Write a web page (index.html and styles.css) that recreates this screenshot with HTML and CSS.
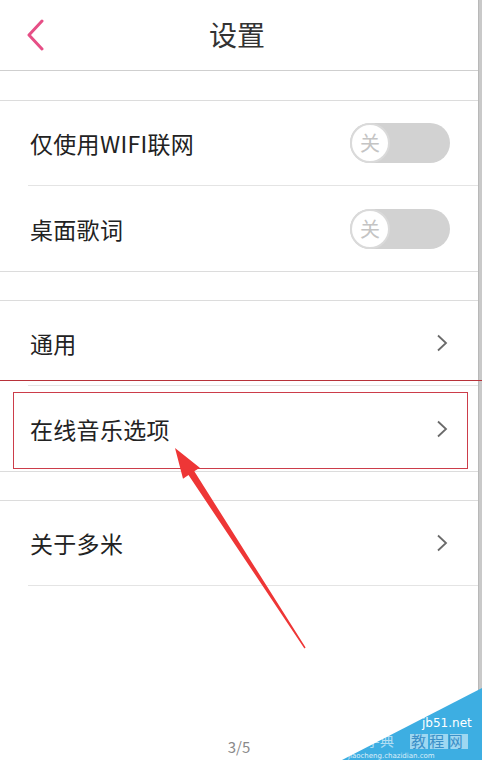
FILE: index.html
```html
<!DOCTYPE html>
<html lang="zh">
<head>
<meta charset="utf-8">
<title>设置</title>
<link rel="stylesheet" href="styles.css">
</head>
<body>
<div class="frame">
  <div class="screen">
    <header class="topbar">
      <svg class="back" width="20" height="32" viewBox="0 0 20 32"><polyline points="16,2 3,16 16,30" fill="none" stroke="#e64f86" stroke-width="3" stroke-linecap="round" stroke-linejoin="round"/></svg>
      <h1 class="title">设置</h1>
    </header>

    <section class="group">
      <div class="row"><div class="row-inner"><span class="label">仅使用WIFI联网</span><span class="toggle"><span class="knob">关</span></span></div></div>
      <div class="row"><div class="row-inner"><span class="label">桌面歌词</span><span class="toggle"><span class="knob">关</span></span></div></div>
    </section>

    <section class="group">
      <div class="row"><div class="row-inner"><span class="label">通用</span><svg class="chev" width="12" height="18" viewBox="0 0 12 18"><polyline points="2,1.5 10,9 2,16.5" fill="none" stroke="#6a6a6a" stroke-width="1.8"/></svg></div></div>
      <div class="row"><div class="row-inner"><span class="label">在线音乐选项</span><svg class="chev" width="12" height="18" viewBox="0 0 12 18"><polyline points="2,1.5 10,9 2,16.5" fill="none" stroke="#6a6a6a" stroke-width="1.8"/></svg></div></div>
    </section>

    <section class="group group-last">
      <div class="row"><div class="row-inner"><span class="label">关于多米</span><svg class="chev" width="12" height="18" viewBox="0 0 12 18"><polyline points="2,1.5 10,9 2,16.5" fill="none" stroke="#6a6a6a" stroke-width="1.8"/></svg></div></div>
    </section>

    <div class="pager">3/5</div>
  </div>
  <div class="edge"></div>

  <div class="mark-line"></div>
  <div class="mark-box"></div>
  <svg class="arrow" width="482" height="760" viewBox="0 0 482 760">
    <polygon points="175,448 199.8,467.7 194.3,471.3 305.6,647.6 304.4,648.4 188.5,475.1 183,478.7" fill="#ee3636"/>
  </svg>
  <svg class="watermark" width="140" height="72" viewBox="0 0 140 72">
    <polygon points="140,0 140,72 0,72" fill="#3daee2"/>
    <text x="80" y="39" font-family="DejaVu Sans, sans-serif" font-size="12" fill="#ffffff">jb51.net</text>
    <rect x="68" y="46" width="18" height="15" fill="#ffffff" opacity="0.5"/>
    <rect x="88" y="46" width="18" height="15" fill="#ffffff" opacity="0.5"/>
    <rect x="108" y="46" width="18" height="15" fill="#ffffff" opacity="0.5"/>
    <text x="69" y="59" font-family="Noto Sans CJK SC, sans-serif" font-size="15" fill="#3a8fc8">教 程 网</text>
    <text x="10" y="58" font-family="Noto Sans CJK SC, sans-serif" font-size="14" fill="#ffffff" opacity="0.6">查字典</text>
    <text x="6" y="70" font-family="DejaVu Sans, sans-serif" font-size="7" fill="#ffffff" opacity="0.8">jiaocheng.chazidian.com</text>
  </svg>
</div>
</body>
</html>
```

FILE: styles.css
```css
* { box-sizing: border-box; }
html, body { margin: 0; padding: 0; background: #ffffff; }
body { font-family: "Noto Sans CJK SC", "Noto Sans", sans-serif; }

.frame {
  position: relative;
  width: 482px;
  height: 760px;
  overflow: hidden;
  display: flex;
}

.screen {
  width: 478px;
  height: 760px;
  display: flex;
  flex-direction: column;
  background: #ffffff;
}
.edge {
  width: 4px;
  background: #c9c9c9;
  border-left: 1px solid #b8b8b8;
}

.topbar {
  height: 71px;
  flex: none;
  display: flex;
  align-items: center;
  justify-content: center;
  position: relative;
  border-bottom: 1px solid #cfcfcf;
}
.back { position: absolute; left: 26px; top: 19px; }
.title {
  margin: 0;
  font-size: 28px;
  font-weight: 400;
  color: #333333;
  margin-left: -4px;
  margin-top: -2px;
}

.group {
  margin-top: 29px;
  border-top: 1px solid #dcdcdc;
  border-bottom: 1px solid #dcdcdc;
}
.group + .group { margin-top: 28px; }
.group-last { border-bottom: none; }

.row { padding-left: 28px; }
.row-inner {
  height: 85px;
  display: flex;
  align-items: center;
  justify-content: space-between;
  padding-left: 2px;
  padding-right: 28px;
  border-bottom: 1px solid #e4e4e4;
}
.group .row:last-child .row-inner { border-bottom: none; }
.group-last .row:last-child .row-inner { border-bottom: 1px solid #e4e4e4; }

.label {
  font-size: 23px;
  color: #222222;
  letter-spacing: 0.3px;
}

.toggle {
  width: 100px;
  height: 40px;
  border-radius: 20px;
  background: #d2d2d2;
  display: flex;
  align-items: center;
}
.knob {
  width: 40px;
  height: 40px;
  border-radius: 50%;
  background: #ffffff;
  border: 2px solid #dadada;
  display: flex;
  align-items: center;
  justify-content: center;
  font-size: 20px;
  color: #c4c4c4;
  line-height: 1;
}
.chev { margin-right: 2px; }

.pager {
  margin-top: auto;
  text-align: center;
  font-size: 15px;
  color: #8a8a8a;
  padding-bottom: 2px;
  height: 24px;
}

.mark-line {
  position: absolute;
  left: 0;
  right: 0;
  top: 380px;
  height: 1px;
  background: #b8323a;
}
.mark-box {
  position: absolute;
  left: 13px;
  top: 392px;
  width: 455px;
  height: 77px;
  border: 1px solid #cc3d4a;
}
.arrow { position: absolute; left: 0; top: 0; }
.watermark { position: absolute; right: 0; bottom: 0; }
```
